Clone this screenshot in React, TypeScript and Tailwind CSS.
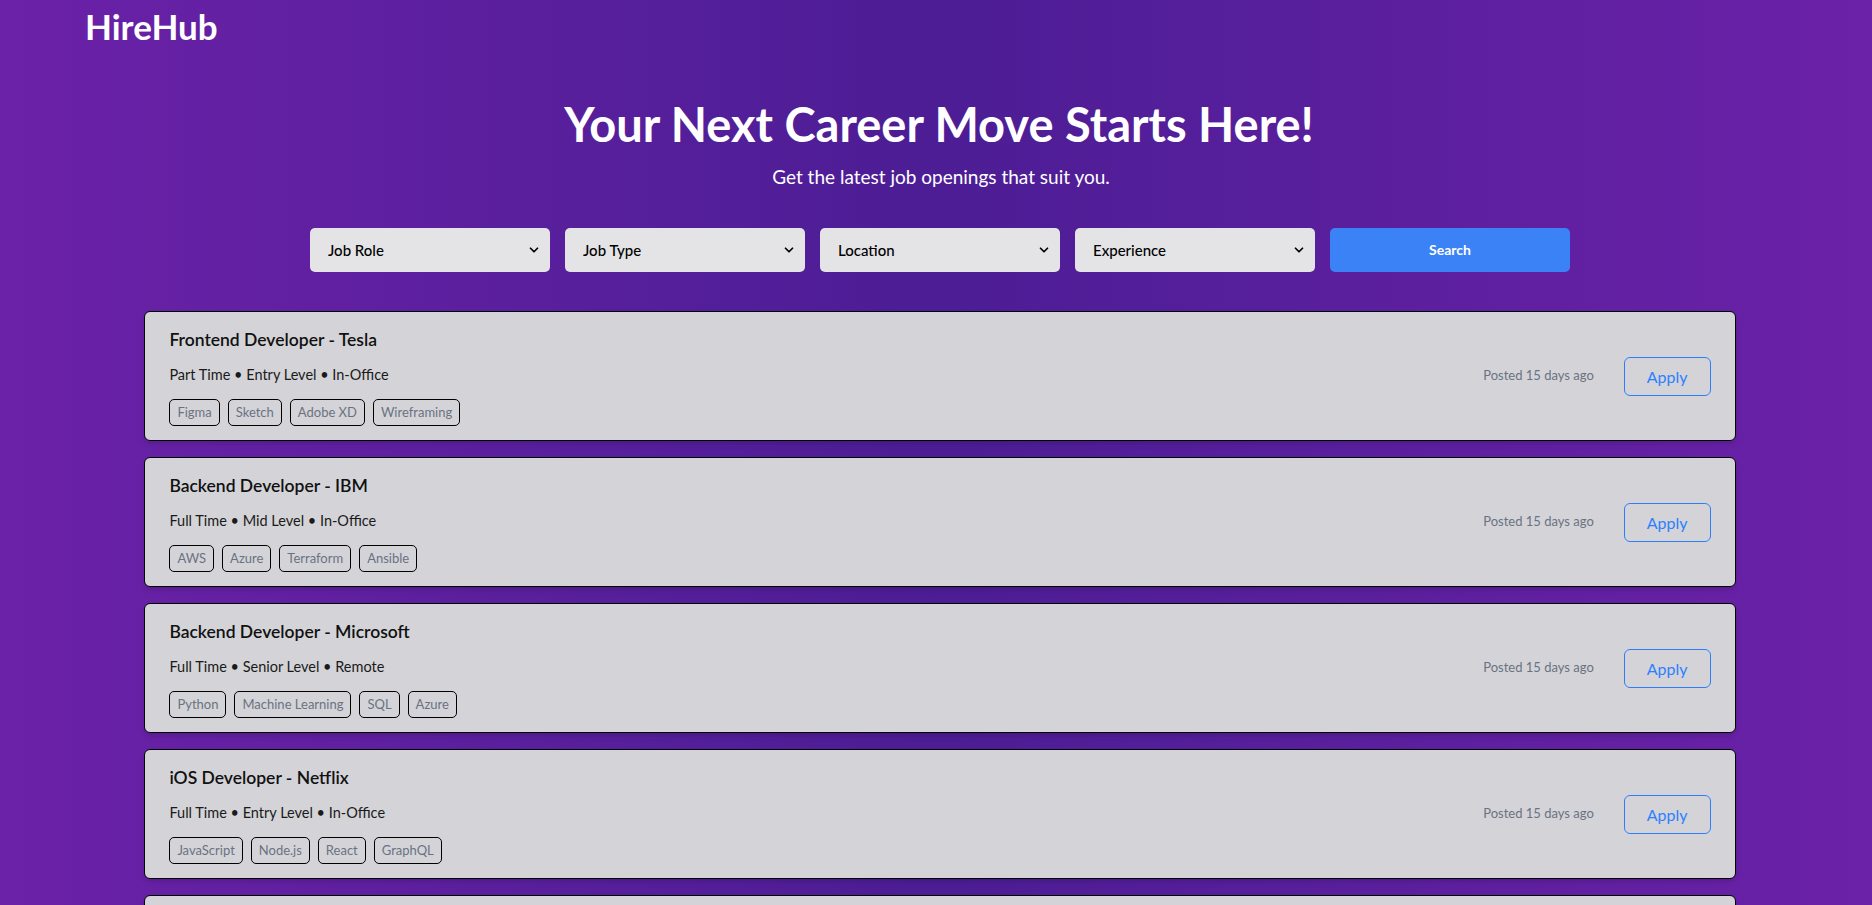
import { ChevronDown } from "lucide-react";

type Job = {
  title: string;
  meta: string;
  tags: string[];
  posted: string;
};

const jobs: Job[] = [
  {
    title: "Frontend Developer - Tesla",
    meta: "Part Time • Entry Level • In-Office",
    tags: ["Figma", "Sketch", "Adobe XD", "Wireframing"],
    posted: "Posted 15 days ago",
  },
  {
    title: "Backend Developer - IBM",
    meta: "Full Time • Mid Level • In-Office",
    tags: ["AWS", "Azure", "Terraform", "Ansible"],
    posted: "Posted 15 days ago",
  },
  {
    title: "Backend Developer - Microsoft",
    meta: "Full Time • Senior Level • Remote",
    tags: ["Python", "Machine Learning", "SQL", "Azure"],
    posted: "Posted 15 days ago",
  },
  {
    title: "iOS Developer - Netflix",
    meta: "Full Time • Entry Level • In-Office",
    tags: ["JavaScript", "Node.js", "React", "GraphQL"],
    posted: "Posted 15 days ago",
  },
  {
    title: "Data Scientist - Google",
    meta: "Full Time • Mid Level • Remote",
    tags: ["Python", "TensorFlow", "SQL", "Pandas"],
    posted: "Posted 15 days ago",
  },
];

const filters = ["Job Role", "Job Type", "Location", "Experience"];

function FilterSelect({ label }: { label: string }) {
  return (
    <div className="relative w-[240px]">
      <select className="h-[44px] w-full appearance-none rounded-[5px] bg-[#e4e4e7] pl-[18px] pr-8 text-[15px] font-medium text-black outline-none">
        <option>{label}</option>
      </select>
      <ChevronDown
        size={14}
        strokeWidth={3}
        className="pointer-events-none absolute right-[9px] top-[15px] text-black"
      />
    </div>
  );
}

function JobCard({ job }: { job: Job }) {
  return (
    <div className="flex items-center justify-between rounded-md border border-black bg-[#d4d4d8] px-6 pt-[14px] pb-[14px] shadow-md">
      <div>
        <h2 className="text-[17.5px] leading-7 font-semibold text-[#111111]">
          {job.title}
        </h2>
        <p className="mt-[9px] text-[14.5px] leading-6 text-[#1a1a1a]">
          {job.meta}
        </p>
        <div className="mt-[12px] flex gap-2">
          {job.tags.map((tag) => (
            <span
              key={tag}
              className="rounded-[5px] border border-black px-[7px] py-[3px] text-[13px] leading-[19px] text-gray-500"
            >
              {tag}
            </span>
          ))}
        </div>
      </div>
      <div className="flex items-center gap-[30px]">
        <span className="text-[13px] text-gray-500">{job.posted}</span>
        <button className="rounded-md border border-blue-500 px-[22px] py-2 text-base leading-[21px] text-blue-500">
          Apply
        </button>
      </div>
    </div>
  );
}

export default function App() {
  return (
    <div
      className="min-h-screen bg-linear-to-r from-[#6b21a8] via-[#4c1d95] to-[#6b21a8] pb-10"
      style={{ fontFamily: 'Lato, "Open Sans", sans-serif' }}
    >
      <header className="px-[85px] pt-2">
        <h1 className="text-[35px] leading-9 font-bold text-white">HireHub</h1>
      </header>

      <section className="mt-[56px] flex flex-col items-center">
        <h2 className="ml-[6px] text-[47px] leading-[48px] font-bold text-white">
          Your Next Career Move Starts Here!
        </h2>
        <p className="mt-[15px] ml-[10px] text-[19px] leading-7 text-white">
          Get the latest job openings that suit you.
        </p>
        <div className="mt-[37px] ml-[8px] flex gap-[15px]">
          {filters.map((f) => (
            <FilterSelect key={f} label={f} />
          ))}
          <button className="h-[44px] w-[240px] rounded-[5px] bg-[#3b82f6] text-sm font-bold text-white">
            Search
          </button>
        </div>
      </section>

      <main className="mt-[39px] ml-[calc(7.5%+4px)] flex w-[85%] flex-col gap-4">
        {jobs.map((job) => (
          <JobCard key={job.title} job={job} />
        ))}
      </main>
    </div>
  );
}
